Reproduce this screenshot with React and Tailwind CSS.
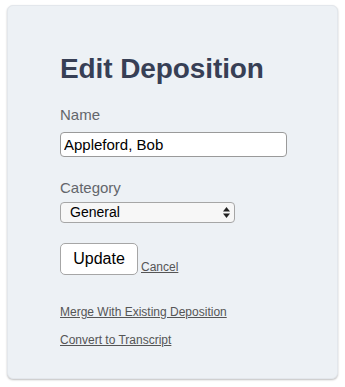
export default function App() {
  return (
    <div className="w-[345px] h-[387px] bg-white pt-[5px] pl-[7px]" style={{ fontFamily: '"Liberation Sans", Arial, sans-serif' }}>
      <div className="w-[331px] h-[374px] rounded-md bg-[#edf1f5] shadow-[0_1px_2px_rgba(0,0,0,0.25)] border border-[#e3e7ec] pl-[52px] pt-[46px]">
        <h1 className="text-[28px] leading-[34px] font-bold text-[#373f55] tracking-[-0.1px]">Edit Deposition</h1>
        <div className="mt-[20px] text-[15px] leading-[18px] text-[#63666b]">Name</div>
        <input
          defaultValue="Appleford, Bob"
          className="mt-[8px] block w-[227px] h-[25px] rounded-[4px] border border-[#9a9a9a] bg-white px-[3px] text-[15px] text-black outline-none"
        />
        <div className="mt-[22px] text-[15px] leading-[18px] text-[#63666b]">Category</div>
        <div className="mt-[5px] relative w-[175px] h-[21px] rounded-[4px] border border-[#a6a6a6] bg-[#f7f7f7] flex items-center pl-[9px] text-[14px] text-black">
          General
          <svg className="absolute right-[4px] top-[4px]" width="7" height="11" viewBox="0 0 7 11">
            <path d="M3.5 0L7 4.5H0z" fill="#222" />
            <path d="M3.5 11L7 6.5H0z" fill="#222" />
          </svg>
        </div>
        <div className="mt-[20px] flex items-end">
          <button className="w-[78px] h-[32px] rounded-[5px] border border-[#a6a6a6] bg-white text-[16px] text-black">Update</button>
          <a href="#" className="ml-[3px] mb-[1px] text-[12px] leading-[14px] text-[#555] underline">Cancel</a>
        </div>
        <a href="#" className="mt-[30px] block text-[12px] leading-[14px] text-[#555] underline w-fit">Merge With Existing Deposition</a>
        <a href="#" className="mt-[14px] block text-[12px] leading-[14px] text-[#555] underline w-fit">Convert to Transcript</a>
      </div>
    </div>
  )
}
